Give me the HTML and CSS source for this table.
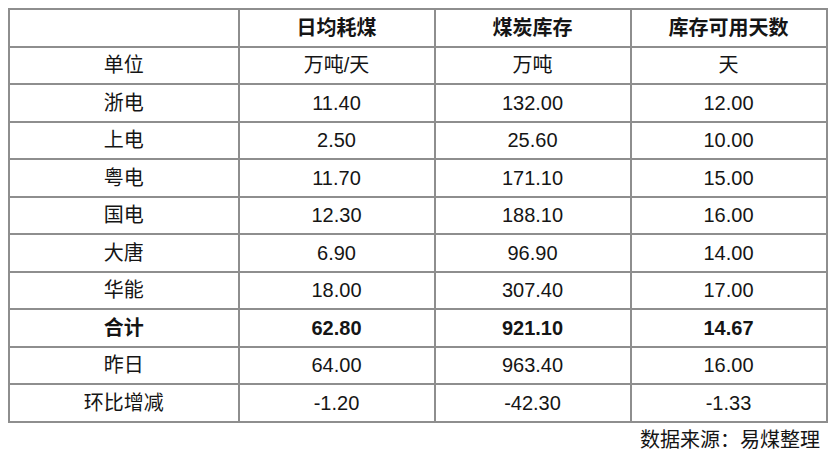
FILE: index.html
```html
<!DOCTYPE html>
<html lang="zh">
<head>
<meta charset="utf-8">
<link rel="stylesheet" href="styles.css">
</head>
<body>
<div class="wrap">
<table class="coal">
  <colgroup>
    <col class="c-first">
    <col class="c-data">
    <col class="c-data">
    <col class="c-data">
  </colgroup>
  <tr class="bold"><td></td><td>日均耗煤</td><td>煤炭库存</td><td>库存可用天数</td></tr>
  <tr><td>单位</td><td>万吨/天</td><td>万吨</td><td>天</td></tr>
  <tr><td>浙电</td><td>11.40</td><td>132.00</td><td>12.00</td></tr>
  <tr><td>上电</td><td>2.50</td><td>25.60</td><td>10.00</td></tr>
  <tr><td>粤电</td><td>11.70</td><td>171.10</td><td>15.00</td></tr>
  <tr><td>国电</td><td>12.30</td><td>188.10</td><td>16.00</td></tr>
  <tr><td>大唐</td><td>6.90</td><td>96.90</td><td>14.00</td></tr>
  <tr><td>华能</td><td>18.00</td><td>307.40</td><td>17.00</td></tr>
  <tr class="bold"><td>合计</td><td>62.80</td><td>921.10</td><td>14.67</td></tr>
  <tr><td>昨日</td><td>64.00</td><td>963.40</td><td>16.00</td></tr>
  <tr><td>环比增减</td><td>-1.20</td><td>-42.30</td><td>-1.33</td></tr>
</table>
<div class="source">数据来源：易煤整理</div>
</div>
</body>
</html>
```
FILE: styles.css
```css
html, body {
  margin: 0;
  padding: 0;
  background: #ffffff;
}
body {
  font-family: "Liberation Sans", "Noto Sans CJK SC", sans-serif;
  color: #151515;
}
.wrap {
  padding: 8px 0 0 8px;
  width: 819px;
}
.coal {
  border-collapse: collapse;
  width: 819px;
  table-layout: fixed;
  font-size: 20px;
}
.c-first { width: 229.5px; }
.c-data { width: 196px; }
.coal td {
  border: 2px solid #8e8e8e;
  height: 35.5px;
  padding: 0;
  text-align: center;
  vertical-align: middle;
  line-height: 24px;
}
.coal tr.bold td {
  font-weight: bold;
}
.source {
  text-align: right;
  font-size: 20px;
  line-height: 28px;
  padding-top: 3px;
  padding-right: 7px;
  color: #151515;
}
```
